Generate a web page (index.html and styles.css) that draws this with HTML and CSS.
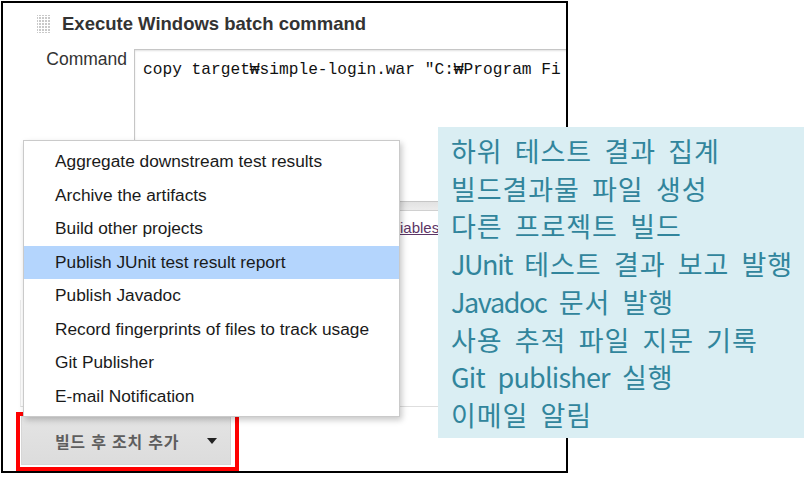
FILE: index.html
```html
<!DOCTYPE html>
<html lang="ko">
<head>
<meta charset="utf-8">
<title>Execute Windows batch command</title>
<link rel="stylesheet" href="styles.css">
</head>
<body>
<div class="page">
  <div class="frame">
    <div class="head">
      <svg class="grip" width="16" height="20" viewBox="0 0 16 20" aria-hidden="true">
        <defs>
          <pattern id="dots" width="3" height="3" patternUnits="userSpaceOnUse">
            <rect x="0" y="0" width="2" height="2" fill="#c9c9c9"/>
          </pattern>
        </defs>
        <rect x="1" y="1" width="14" height="18" fill="url(#dots)"/>
      </svg>
      <span class="title">Execute Windows batch command</span>
    </div>
    <div class="row">
      <div class="label">Command</div>
      <div class="field">
        <div class="textarea">copy target₩simple-login.war "C:₩Program Fi</div>
        <div class="handle"></div>
        <a class="help-link" href="#">See the list of available environment variables</a>
      </div>
    </div>
    <div class="section-box"></div>
    <div class="add-wrap">
      <button class="add-btn" type="button"><span>빌드 후 조치 추가</span><span class="caret"></span></button>
    </div>
    <ul class="menu">
      <li>Aggregate downstream test results</li>
      <li>Archive the artifacts</li>
      <li>Build other projects</li>
      <li class="active">Publish JUnit test result report</li>
      <li>Publish Javadoc</li>
      <li>Record fingerprints of files to track usage</li>
      <li>Git Publisher</li>
      <li>E-mail Notification</li>
    </ul>
  </div>
  <div class="note">
    <div>하위 테스트 결과 집계</div>
    <div>빌드결과물 파일 생성</div>
    <div>다른 프로젝트 빌드</div>
    <div><span class="lat">JUnit</span> 테스트 결과 보고 발행</div>
    <div><span class="lat">Javadoc</span> 문서 발행</div>
    <div>사용 추적 파일 지문 기록</div>
    <div><span class="lat lat-loose">Git publisher</span> 실행</div>
    <div>이메일 알림</div>
  </div>
</div>
</body>
</html>
```
FILE: styles.css
```css
* { box-sizing: border-box; }
html, body { margin: 0; padding: 0; background: #fff; }
body { font-family: "Liberation Sans", Arial, sans-serif; }

.page {
  position: relative;
  width: 804px;
  height: 477px;
  overflow: hidden;
}

.frame {
  position: relative;
  margin: 1px 0 0 1px;
  width: 567px;
  height: 472px;
  border: 2px solid #000;
  overflow: hidden;
  background: #fff;
}

.head {
  display: flex;
  align-items: center;
  gap: 10px;
  padding: 11px 0 0 33px;
  height: 31px;
}
.grip { display: block; flex-shrink: 0; }
.title {
  font-weight: bold;
  font-size: 18.5px;
  line-height: 20px;
  color: #333;
}

.row {
  display: flex;
  margin-top: 15px;
}
.label {
  flex-shrink: 0;
  width: 124px;
  margin-right: 7px;
  text-align: right;
  font-size: 17.5px;
  line-height: 20px;
  color: #333;
}
.field {
  flex-shrink: 0;
  width: 560px;
}
.textarea {
  height: 153px;
  border: 1px solid #c6c6c6;
  padding: 10px 8px;
  font-family: "Liberation Mono", "Courier New", monospace;
  font-size: 16.2px;
  line-height: 20px;
  white-space: pre;
  color: #111;
  box-shadow: inset 0 1px 2px rgba(0,0,0,0.12);
}
.handle {
  height: 9px;
  background: linear-gradient(#e2e2e2, #ececec);
  border: 1px solid #d0d0d0;
  border-top: none;
}
.help-link {
  display: block;
  margin-top: 8px;
  font-size: 15px;
  line-height: 18px;
  color: #5c3566;
  text-decoration: underline;
}

.section-box {
  margin: 63px 0 0 17px;
  width: 620px;
  height: 107px;
  border-left: 1px solid #ececec;
  border-bottom: 1px solid #dedede;
}

.add-wrap {
  display: flex;
  width: fit-content;
  margin: 5px 0 0 13px;
  border: 4px solid #f00;
  padding: 0 4px 2px 1px;
}
.add-btn {
  display: flex;
  align-items: center;
  width: 210px;
  height: 49px;
  margin: 0;
  padding: 0 13px 0 33px;
  background: linear-gradient(#e4e4e4, #dcdcdc);
  border: 1px solid #d6d6d6;
  font-family: "Noto Sans CJK KR", "Liberation Sans", sans-serif;
  font-weight: bold;
  font-size: 16px;
  letter-spacing: 0.6px;
  word-spacing: 0.5px;
  color: #5e5e5e;
}
.caret {
  margin-left: auto;
  width: 0;
  height: 0;
  border-left: 5px solid transparent;
  border-right: 5px solid transparent;
  border-top: 6px solid #222;
}

.menu {
  position: absolute;
  left: 20px;
  top: 137px;
  width: 377px;
  margin: 0;
  padding: 4px 0 3px;
  list-style: none;
  background: #fff;
  border: 1px solid #cacaca;
  box-shadow: 2px 3px 6px rgba(0,0,0,0.22);
}
.menu li {
  height: 33.5px;
  padding-left: 31px;
  font-size: 17.3px;
  line-height: 33.5px;
  color: #1a1a1a;
  white-space: nowrap;
}
.menu li.active { background: #b4d5fd; }

.note {
  position: absolute;
  left: 438px;
  top: 127px;
  width: 366px;
  height: 311px;
  padding: 5px 0 0 13px;
  background: #daeef3;
  color: #31859c;
  font-family: "Noto Sans CJK KR", "Noto Sans", sans-serif;
  font-size: 27px;
  letter-spacing: 0.9px;
  word-spacing: 3.9px;
  line-height: 37.7px;
  white-space: nowrap;
}
.note .lat {
  letter-spacing: -1.4px;
}
.note .lat-loose {
  letter-spacing: -0.8px;
  word-spacing: 6px;
}
```
